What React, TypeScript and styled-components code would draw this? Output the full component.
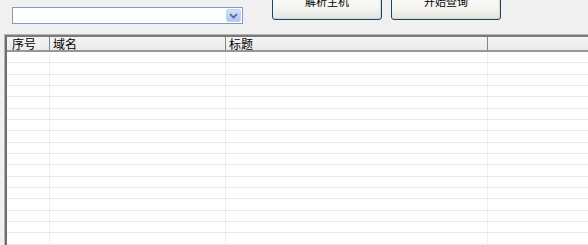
import React from "react";
import styled, { createGlobalStyle } from "styled-components";

const Global = createGlobalStyle`
  html, body { margin: 0; padding: 0; }
  body {
    background: #f0f0f0;
    overflow: hidden;
    width: 588px;
    height: 245px;
    font-family: "Noto Sans CJK SC", "Liberation Sans", sans-serif;
  }
`;

const Page = styled.div`
  width: 588px;
  height: 245px;
  overflow: hidden;
  display: flex;
  flex-direction: column;
`;

const Toolbar = styled.div`
  display: flex;
  align-items: flex-start;
  height: 34px;
  flex: none;
`;

const Combo = styled.div`
  margin: 7px 0 0 12px;
  width: 231px;
  height: 17px;
  box-sizing: border-box;
  border: 1px solid #7f9db9;
  background: #fff;
  display: flex;
  justify-content: flex-end;
  align-items: center;
  padding-right: 1px;
`;

const DropBtn = styled.div`
  width: 15px;
  height: 13px;
  border-radius: 2px;
  background: linear-gradient(#d3e0fb, #bccff6 60%, #b0c6f4);
  border: 1px solid #c3d3f6;
  box-sizing: border-box;
  display: flex;
  align-items: center;
  justify-content: center;
`;

const Button = styled.button<{ $left: number }>`
  margin: -19px 0 0 ${(p) => p.$left}px;
  width: 110px;
  height: 39px;
  box-sizing: border-box;
  border: 1px solid #21446f;
  border-radius: 3px;
  background: linear-gradient(#ffffff, #f5f5f1 70%, #e4e3dc);
  box-shadow: inset -1px -1px 0 #d8d6cc;
  font-family: "Noto Sans CJK SC", sans-serif;
  font-size: 11px;
  color: #000;
  padding: 0;
  display: flex;
  align-items: center;
  justify-content: center;
`;

const ListOuter = styled.div`
  margin-left: 4px;
  border-top: 1px solid #b4b4b4;
  border-left: 1px solid #b4b4b4;
  flex: 1;
  min-height: 0;
`;

const ListInner = styled.div`
  border-top: 2px solid #7a7a7a;
  border-left: 2px solid #6e6e6e;
  background: #fff;
  height: 100%;
  overflow: hidden;
`;

const Header = styled.div`
  display: flex;
  height: 15px;
  box-sizing: border-box;
  background: linear-gradient(#f4f4f4, #ebebeb);
  border-bottom: 2px solid #979797;
`;

const HeadCell = styled.div<{ $w: number; $pad: number }>`
  width: ${(p) => p.$w}px;
  flex: none;
  box-sizing: border-box;
  padding-left: ${(p) => p.$pad}px;
  border-right: 1px solid #858585;
  font-size: 12px;
  line-height: 13px;
  color: #000;
  white-space: nowrap;
`;

const Row = styled.div`
  display: flex;
  height: 11.33px;
  box-sizing: border-box;
  border-bottom: 1px solid #e8e8e8;
`;

const Cell = styled.div<{ $w: number }>`
  width: ${(p) => p.$w}px;
  flex: none;
  box-sizing: border-box;
  border-right: 1px solid #efefef;
`;

const cols = [
  { w: 43, pad: 5, label: "序号" },
  { w: 176, pad: 3, label: "域名" },
  { w: 262, pad: 3, label: "标题" },
  { w: 120, pad: 3, label: "" },
];

export default function App() {
  const rows = Array.from({ length: 18 }, (_, i) => i);
  return (
    <>
      <Global />
      <Page>
        <Toolbar>
          <Combo>
            <DropBtn>
              <svg width="9" height="6" viewBox="0 0 9 6">
                <path d="M1 1 L4.5 4.5 L8 1" fill="none" stroke="#4d6185" strokeWidth="1.6" />
              </svg>
            </DropBtn>
          </Combo>
          <Button $left={29}>解析主机</Button>
          <Button $left={9}>开始查询</Button>
        </Toolbar>
        <ListOuter>
          <ListInner>
            <Header>
              {cols.map((c, i) => (
                <HeadCell key={i} $w={c.w} $pad={c.pad}>
                  {c.label}
                </HeadCell>
              ))}
            </Header>
            {rows.map((r) => (
              <Row key={r}>
                {cols.map((c, i) => (
                  <Cell key={i} $w={c.w} />
                ))}
              </Row>
            ))}
          </ListInner>
        </ListOuter>
      </Page>
    </>
  );
}
